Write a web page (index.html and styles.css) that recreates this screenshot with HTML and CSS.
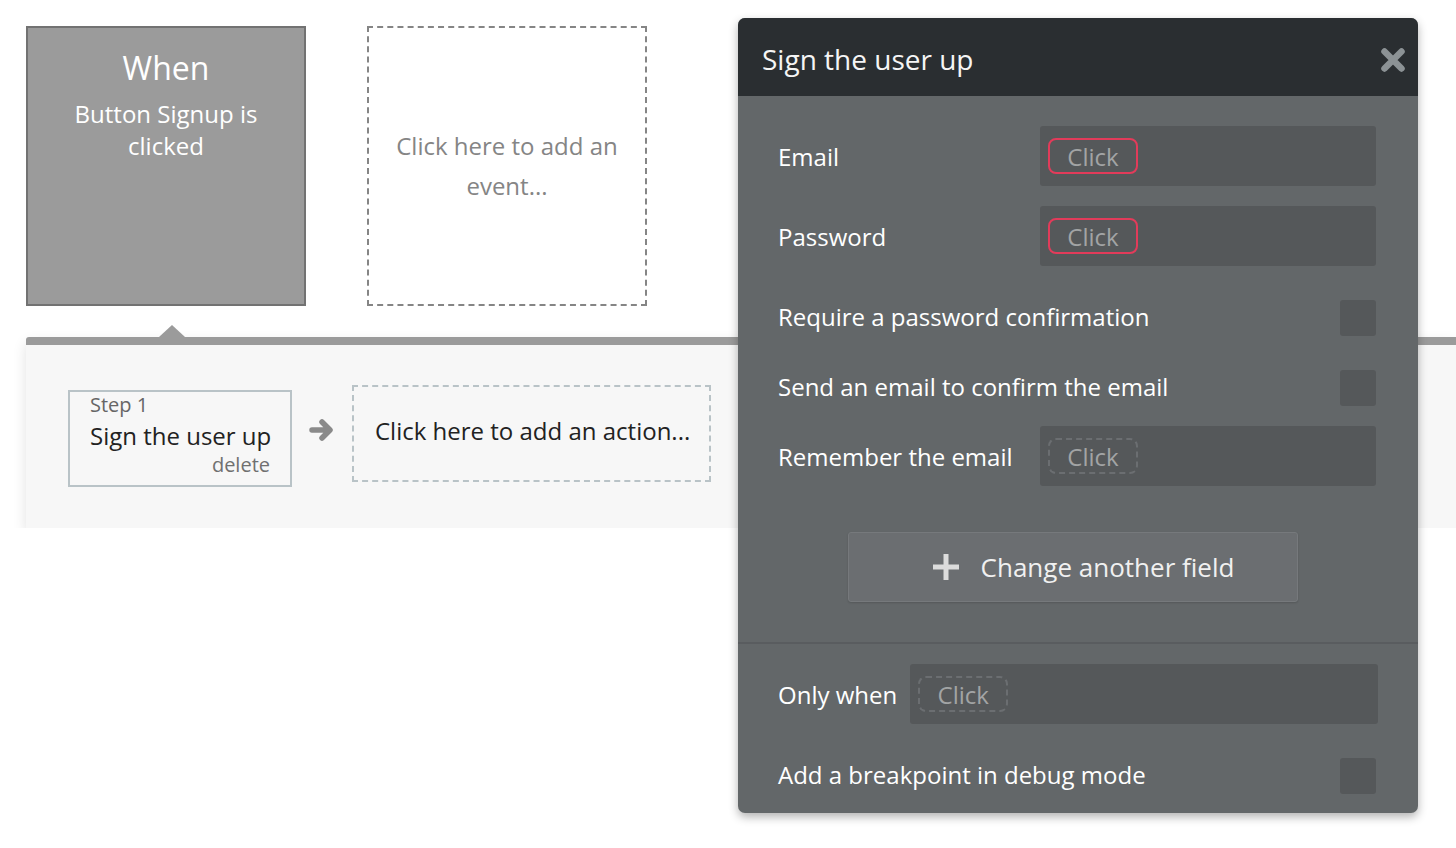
FILE: index.html
```html
<!DOCTYPE html>
<html>
<head>
<meta charset="utf-8">
<link rel="stylesheet" href="styles.css">
</head>
<body>
<div class="canvas">
  <div class="events">
    <div class="when">
      <div class="when-title">When</div>
      <div class="when-desc">Button Signup is clicked</div>
    </div>
    <div class="add-event">Click here to add an event...</div>
  </div>
  <div class="strip">
    <div class="strip-row">
      <div class="step">
        <div class="step-num">Step 1</div>
        <div class="step-name">Sign the user up</div>
        <div class="step-del">delete</div>
      </div>
      <svg class="arrow" viewBox="0 0 25 24" width="25" height="24">
        <path d="M3 12 H20.5 M13 4 L21 12 L13 20" fill="none" stroke="#8a8a8a" stroke-width="5.5" stroke-linecap="round" stroke-linejoin="round"/>
      </svg>
      <div class="add-action">Click here to add an action...</div>
    </div>
  </div>
</div>

<div class="panel">
  <div class="panel-head">
    <div class="panel-title">Sign the user up</div>
    <svg class="close" viewBox="0 0 26 26" width="26" height="26">
      <path d="M4.5 4.5 L21.5 21.5 M21.5 4.5 L4.5 21.5" fill="none" stroke="#8c9295" stroke-width="6.5" stroke-linecap="round"/>
    </svg>
  </div>
  <div class="panel-body">
    <div class="row mt30">
      <div class="label">Email</div>
      <div class="field"><span class="pill red">Click</span></div>
    </div>
    <div class="row mt20">
      <div class="label">Password</div>
      <div class="field"><span class="pill red">Click</span></div>
    </div>
    <div class="row mt20">
      <div class="label">Require a password confirmation</div>
      <div class="check"></div>
    </div>
    <div class="row mt10">
      <div class="label">Send an email to confirm the email</div>
      <div class="check"></div>
    </div>
    <div class="row mt10">
      <div class="label">Remember the email</div>
      <div class="field"><span class="pill dashed">Click</span></div>
    </div>
    <div class="add-field">
      <svg class="plus" viewBox="0 0 28 28" width="28" height="28">
        <path d="M14 1 V27 M1 14 H27" fill="none" stroke="#dcdcdc" stroke-width="5"/>
      </svg>
      <span>Change another field</span>
    </div>
  </div>
  <div class="divider"></div>
  <div class="panel-body">
    <div class="row mt20">
      <div class="label short">Only when</div>
      <div class="field wide"><span class="pill dashed">Click</span></div>
    </div>
    <div class="row mt20">
      <div class="label">Add a breakpoint in debug mode</div>
      <div class="check"></div>
    </div>
  </div>
</div>
</body>
</html>
```

FILE: styles.css
```css
html, body {
  margin: 0;
  padding: 0;
  background: #ffffff;
  font-family: "Open Sans", "Noto Sans", sans-serif;
  overflow: hidden;
}

.canvas {
  padding: 26px 0 0 26px;
}

.events {
  display: flex;
  gap: 61px;
}

.when {
  box-sizing: border-box;
  width: 280px;
  height: 280px;
  background: #9b9b9b;
  border: 2px solid #727272;
  color: #ffffff;
  text-align: center;
  padding-top: 20px;
}

.when-title {
  font-size: 32px;
  line-height: 40px;
}

.when-desc {
  margin: 10px auto 0;
  width: 220px;
  font-size: 24px;
  line-height: 32px;
}

.add-event {
  box-sizing: border-box;
  width: 280px;
  height: 280px;
  border: 2px dashed #858585;
  color: #858585;
  text-align: center;
  font-size: 24px;
  line-height: 40px;
  padding: 98px 18px 0;
}

.strip {
  position: relative;
  margin-top: 31px;
  height: 143px;
  border-top: 8px solid #9b9b9b;
  border-top-left-radius: 3px;
  background: #f7f7f7;
  box-shadow: 0 6px 14px rgba(0, 0, 0, 0.12);
  padding: 40px 0 0 42px;
}

.strip::before {
  content: "";
  position: absolute;
  left: 133px;
  top: -20px;
  border-left: 13px solid transparent;
  border-right: 13px solid transparent;
  border-bottom: 12px solid #9b9b9b;
}

.strip-row {
  display: flex;
  align-items: flex-start;
}

.step {
  box-sizing: border-box;
  width: 224px;
  height: 97px;
  margin-top: 5px;
  border: 2px solid #b9c3c7;
  padding: 1px 20px 0;
}

.step-num {
  font-size: 20px;
  line-height: 24px;
  color: #666666;
}

.step-name {
  font-size: 24px;
  line-height: 38px;
  color: #222222;
  white-space: nowrap;
}

.step-del {
  font-size: 20px;
  line-height: 20px;
  color: #707070;
  text-align: right;
}

.arrow {
  margin: 33px 18px 0 17px;
  flex: none;
}

.add-action {
  box-sizing: border-box;
  width: 359px;
  height: 97px;
  border: 2px dashed #b9c3c7;
  display: flex;
  align-items: center;
  padding: 0 0 6px 21px;
  font-size: 24px;
  color: #222222;
  white-space: nowrap;
}

/* Panel */
.panel {
  position: absolute;
  left: 738px;
  top: 18px;
  width: 680px;
  height: 795px;
  background: #636769;
  border-radius: 7px;
  overflow: hidden;
  box-shadow: 0 4px 10px rgba(0, 0, 0, 0.3);
}

.panel-head {
  height: 78px;
  background: #2a2e31;
  display: flex;
  align-items: center;
  justify-content: space-between;
  padding: 4px 12px 0 24px;
  box-sizing: border-box;
}

.panel-title {
  font-size: 28px;
  color: #f5f5f5;
}

.close {
  margin-top: 2px;
}

.panel-body {
  padding: 0 42px 0 40px;
}

.row {
  height: 60px;
  display: flex;
  align-items: center;
}

.mt10 { margin-top: 10px; }
.mt20 { margin-top: 20px; }
.mt30 { margin-top: 30px; }

.label {
  flex: 1;
  font-size: 24px;
  color: #ffffff;
  white-space: nowrap;
}

.label.short {
  flex: none;
  margin-right: 13px;
}

.field {
  box-sizing: border-box;
  width: 336px;
  height: 60px;
  background: #55585a;
  border-radius: 3px;
  display: flex;
  align-items: center;
  padding-left: 8px;
}

.field.wide {
  width: auto;
  flex: 1;
  margin-right: -2px;
}

.pill {
  box-sizing: border-box;
  width: 90px;
  height: 36px;
  border-radius: 8px;
  display: flex;
  align-items: center;
  justify-content: center;
  font-size: 24px;
  color: #a2a4a5;
}

.pill.red {
  border: 2px solid #e23b5a;
}

.pill.dashed {
  border: 2px dashed #6b6e71;
}

.check {
  width: 36px;
  height: 36px;
  margin-top: 4px;
  background: #55585a;
  border-radius: 3px;
}

.add-field {
  box-sizing: border-box;
  margin: 46px 0 0 70px;
  width: 450px;
  height: 70px;
  background: #6b6e71;
  border: 1px solid #76797c;
  border-radius: 3px;
  box-shadow: 0 1px 2px rgba(0, 0, 0, 0.15);
  display: flex;
  align-items: center;
  justify-content: center;
  gap: 21px;
  padding-left: 20px;
  font-size: 26px;
  color: #f0f0f0;
}

.divider {
  margin-top: 40px;
  height: 2px;
  background: #595c5f;
}
```
